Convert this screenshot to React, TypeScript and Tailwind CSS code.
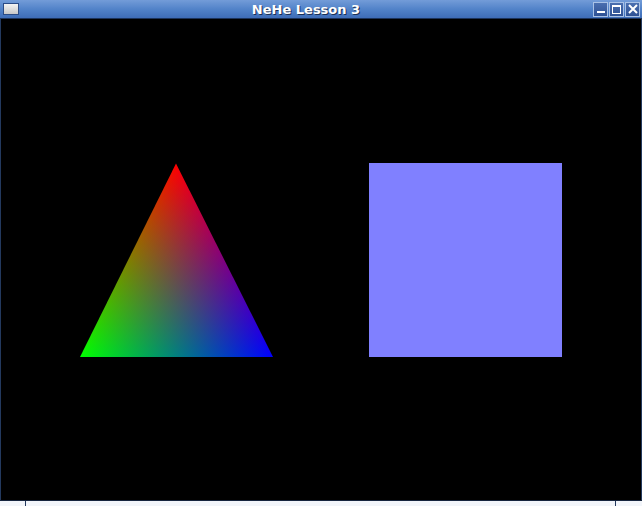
import React from 'react';

const TitleButton: React.FC<{ children: React.ReactNode }> = ({ children }) => (
  <div className="w-[15px] h-[15px] border border-[#a9c2e6] bg-gradient-to-b from-[#4a6fb0] to-[#2e5194] flex items-center justify-center">
    {children}
  </div>
);

const GLCanvas: React.FC = () => (
  <svg width="640" height="481" viewBox="0 0 640 481" className="block">
    <defs>
      <linearGradient id="gRed" gradientUnits="userSpaceOnUse" x1="175" y1="144.5" x2="175" y2="338">
        <stop offset="0" stopColor="#ff0000" />
        <stop offset="1" stopColor="#000000" />
      </linearGradient>
      <linearGradient id="gGreen" gradientUnits="userSpaceOnUse" x1="79" y1="338" x2="233.24" y2="260.68">
        <stop offset="0" stopColor="#00ff00" />
        <stop offset="1" stopColor="#000000" />
      </linearGradient>
      <linearGradient id="gBlue" gradientUnits="userSpaceOnUse" x1="272" y1="338" x2="117.12" y2="261.16">
        <stop offset="0" stopColor="#0000ff" />
        <stop offset="1" stopColor="#000000" />
      </linearGradient>
    </defs>
    <rect x="0" y="0" width="640" height="481" fill="#000000" />
    <g style={{ isolation: 'isolate' }}>
      <polygon points="175,144.5 79,338 272,338" fill="url(#gRed)" />
      <polygon points="175,144.5 79,338 272,338" fill="url(#gGreen)" className="mix-blend-screen" />
      <polygon points="175,144.5 79,338 272,338" fill="url(#gBlue)" className="mix-blend-screen" />
    </g>
    <rect x="368" y="144" width="193" height="194" fill="#8080ff" />
  </svg>
);

export default function App() {
  return (
    <div className="w-[642px] h-[506px] flex flex-col bg-black overflow-hidden font-['DejaVu_Sans',sans-serif]">
      {/* title bar */}
      <div className="h-[19px] relative flex items-center pl-[3px] pr-[2px] bg-gradient-to-b from-[#739cd8] via-[#5283c9] to-[#3e6db7] border-b border-[#1c335a]">
        <div className="w-[16px] h-[12px] border border-[#2b4c86] bg-gradient-to-b from-[#f4f4f4] to-[#c8c8c8]" />
        <div className="flex-1 text-center text-white font-bold text-[13px] leading-none [text-shadow:1px_1px_0_#1a2f55]">
          NeHe Lesson 3
        </div>
        <div className="flex gap-[1px]">
          <TitleButton>
            <div className="w-[8px] h-[2px] bg-white mt-[6px]" />
          </TitleButton>
          <TitleButton>
            <div className="w-[9px] h-[9px] border border-white border-t-2" />
          </TitleButton>
          <TitleButton>
            <svg width="10" height="10" viewBox="0 0 10 10">
              <path d="M1 1 L9 9 M9 1 L1 9" stroke="#ffffff" strokeWidth="2" />
            </svg>
          </TitleButton>
        </div>
      </div>
      {/* GL area */}
      <div className="flex-1 flex border-l border-r border-[#23395e]">
        <GLCanvas />
      </div>
      {/* bottom frame */}
      <div className="h-[6px] flex border-t border-[#16253e] bg-[#f2f5fa]">
        <div className="w-[26px] border-r border-[#23395e]" />
        <div className="flex-1 border-r border-[#23395e]" />
        <div className="w-[26px]" />
      </div>
    </div>
  );
}
